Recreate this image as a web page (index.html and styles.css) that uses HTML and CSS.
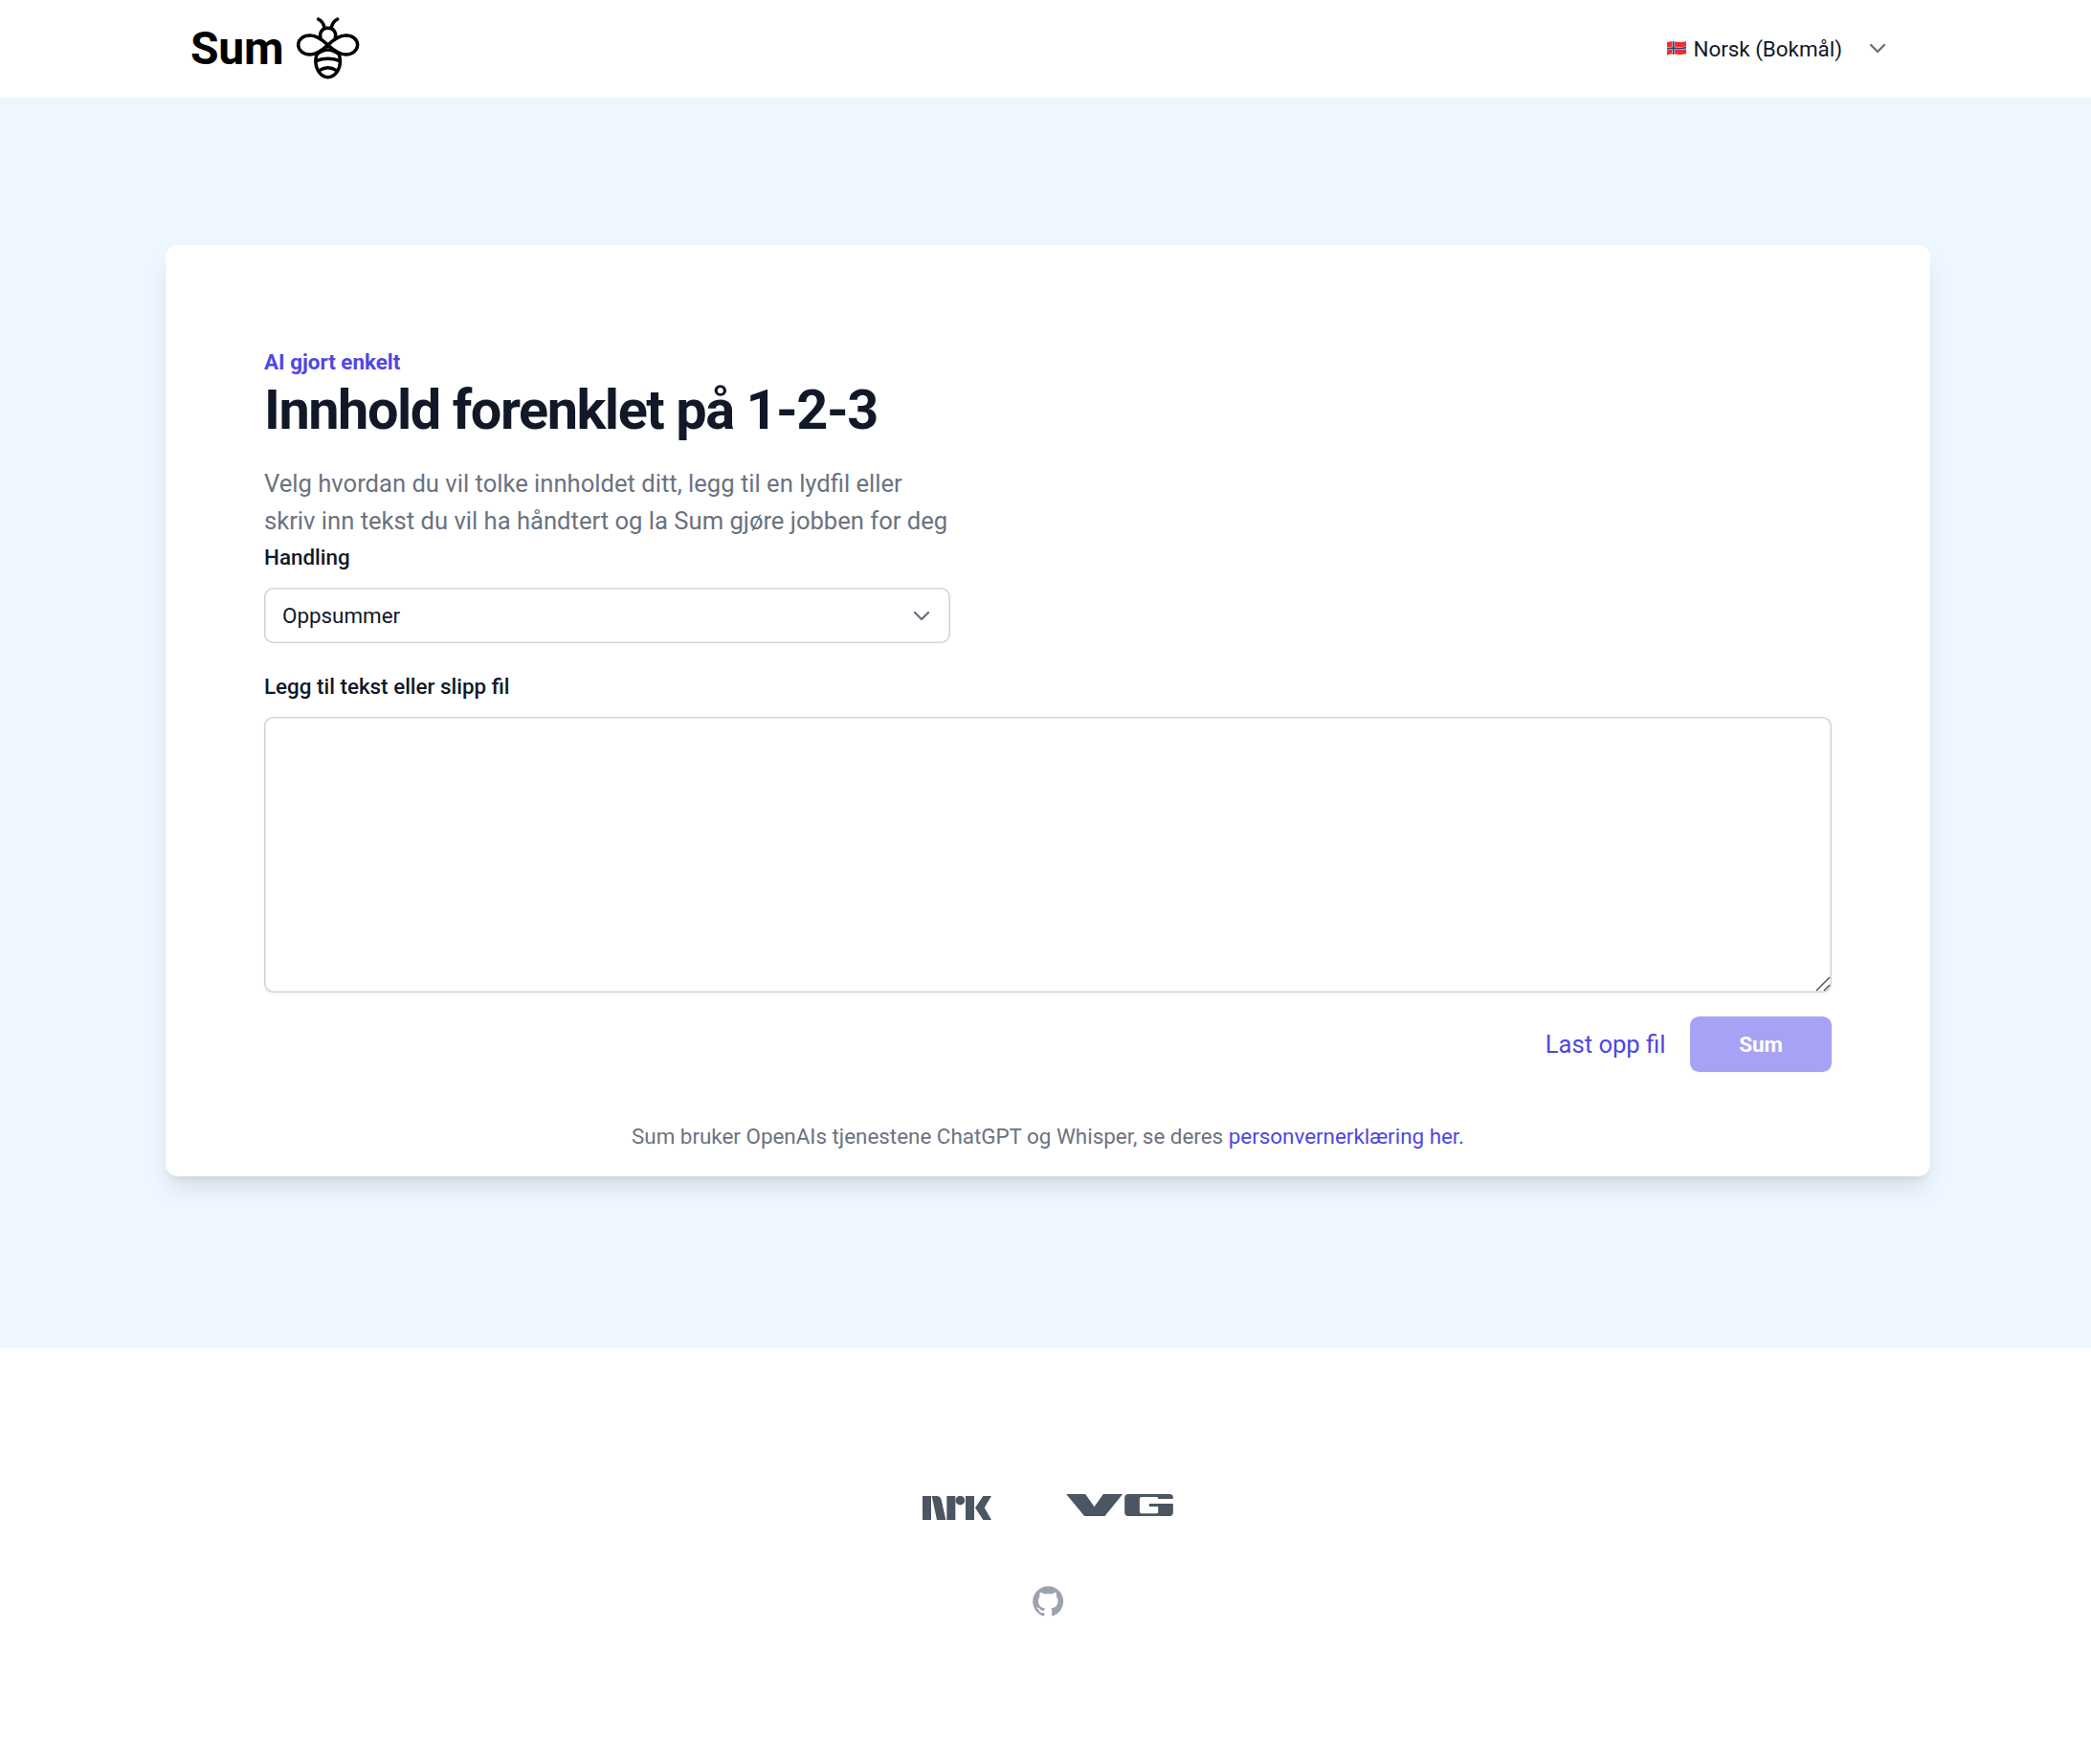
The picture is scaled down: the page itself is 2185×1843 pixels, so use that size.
FILE: index.html
```html
<!DOCTYPE html>
<html lang="nb">
<head>
<meta charset="utf-8">
<title>Sum</title>
<link rel="stylesheet" href="styles.css">
</head>
<body>
<header class="header">
  <a class="brand">
    <span class="brand-name">Sum</span>
    <svg class="bee" viewBox="0 25 196 194" fill="none" stroke="#000" stroke-width="10.5" stroke-linecap="round" stroke-linejoin="round">
      <path d="M68 31Q82 37 87 56M128 31Q114 37 109 56"/>
      <path d="M75 90C70 70 82 59 98 59S126 70 121 90"/>
      <path d="M98 112C76 91 60 82 42 82C20 82 5 95 5 111.500S20 142 42 142C62 142 78 130 98 112C120 91 136 82 154 82C176 82 191 95 191 111.500S176 142 154 142C134 142 118 130 98 112Z"/>
      <path d="M63 142C52 176 70 213 98 213S144 176 133 142Q98 112 63 142Z"/>
      <path d="M61 162Q98 148 135 162M71 192Q98 174 125 192"/>
    </svg>
  </a>
  <div class="language">
    <svg class="flag" viewBox="0 0 60 45">
      <path fill="#ef2b2f" d="M0 3Q15-1 30 2T60 1V40Q45 44 30 41T0 44Z"/>
      <path stroke="#fff" stroke-opacity=".75" stroke-width="9" fill="none" d="M20 1V42M0 24Q15 20 30 22T60 20"/>
      <path stroke="#1b4a80" stroke-width="5" fill="none" d="M20 1V42M0 24Q15 20 30 22T60 20"/>
    </svg>
    <span>Norsk (Bokmål)</span>
    <svg class="chevron" viewBox="0 0 16 9"><path d="M1 1l7 7 7-7"/></svg>
  </div>
</header>
<main class="main">
  <section class="card">
    <p class="eyebrow">AI gjort enkelt</p>
    <h1 class="title">Innhold forenklet på 1-2-3</h1>
    <p class="intro">Velg hvordan du vil tolke innholdet ditt, legg til en lydfil eller<br>skriv inn tekst du vil ha håndtert og la Sum gjøre jobben for deg</p>
    <div class="label">Handling</div>
    <div class="select">
      <span>Oppsummer</span>
      <svg class="chevron" viewBox="0 0 16 9"><path d="M1 1l7 7 7-7"/></svg>
    </div>
    <label class="label label-text" for="content">Legg til tekst eller slipp fil</label>
    <div class="textbox">
      <textarea class="textarea" id="content"></textarea>
      <svg class="grip" viewBox="0 0 16 16"><path d="M1 15L15 1M9 15L15 9"/></svg>
    </div>
    <div class="actions">
      <a class="upload">Last opp fil</a>
      <button class="submit" type="button">Sum</button>
    </div>
    <p class="note">Sum bruker OpenAIs tjenestene ChatGPT og Whisper, se deres <a class="link">personvernerklæring her.</a></p>
  </section>
</main>
<footer class="footer">
  <div class="logos">
    <svg class="nrk" viewBox="72 69 216 75" fill="#4b5563">
      <path d="M72 69H99V144H72ZM101 69H116Q128 69 131 81L145 144H117ZM148 69H175V144H148ZM207 69H234V144H207ZM262 69H288L266 106L288 144H262L237 106Z"/>
      <circle cx="190" cy="83" r="14.500"/>
    </svg>
    <svg class="vg" viewBox="523 63 335 69" fill="#4b5563">
      <path d="M523 63H583L611 103L639 63H700L644 132H580Z"/>
      <path d="M718 63H847Q858 63 858 74V78H811V76Q811 72 806 72H759Q753 72 753 78V118Q753 124 759 124H806Q811 124 811 119V102H783V93H858V121Q858 132 847 132H718Q706 132 706 120V75Q706 63 718 63Z"/>
    </svg>
  </div>
  <svg class="github" viewBox="0 0 24 24" fill="#9ca3af"><path fill-rule="evenodd" d="M12 2C6.477 2 2 6.484 2 12.017c0 4.425 2.865 8.180 6.839 9.504.5.092.682-.217.682-.483 0-.237-.008-.868-.013-1.703-2.782.605-3.369-1.343-3.369-1.343-.454-1.158-1.110-1.466-1.110-1.466-.908-.620.069-.608.069-.608 1.003.070 1.531 1.032 1.531 1.032.892 1.530 2.341 1.088 2.910.832.092-.647.350-1.088.636-1.338-2.220-.253-4.555-1.113-4.555-4.951 0-1.093.390-1.988 1.029-2.688-.103-.253-.446-1.272.098-2.650 0 0 .840-.270 2.750 1.026A9.564 9.564 0 0112 6.844c.850.004 1.705.115 2.504.337 1.909-1.296 2.747-1.027 2.747-1.027.546 1.379.202 2.398.100 2.651.640.700 1.028 1.595 1.028 2.688 0 3.848-2.339 4.695-4.566 4.943.359.309.678.920.678 1.855 0 1.338-.012 2.419-.012 2.747 0 .268.180.580.688.482A10.019 10.019 0 0022 12.017C22 6.484 17.522 2 12 2z" clip-rule="evenodd"/></svg>
</footer>
</body>
</html>
```
FILE: styles.css
```css
* { box-sizing: border-box; }
body {
  margin: 0;
  background: #fff;
  color: #111827;
  font: 22.4px/38px Roboto, sans-serif;
}
p, h1 { margin: 0; }
svg { display: block; flex: none; }

.header {
  height: 102px;
  padding: 0 215px 1px 199px;
  display: flex;
  align-items: center;
  justify-content: space-between;
}
.brand { display: flex; align-items: center; gap: 14px; color: #000; }
.brand-name { font-size: 48px; line-height: 58px; font-weight: 700; letter-spacing: -0.005em; }
.bee { width: 65.300px; height: 64.700px; }
.language { display: flex; align-items: center; }
.flag { width: 20px; height: 15px; margin-right: 7px; }
.chevron {
  width: 16px;
  height: 9px;
  margin-left: 29px;
  fill: none;
  stroke: #6b7280;
  stroke-width: 2.400;
  stroke-linecap: round;
  stroke-linejoin: round;
  overflow: visible;
}

.main { height: 1306px; padding: 154px 168px 0 173px; background: #eef6ff; }
.card {
  height: 973px;
  padding: 104px 103px 0;
  border-radius: 12.800px;
  background: #fff;
  box-shadow: 0 16px 24px -4.800px rgb(0 0 0 / .1), 0 6.400px 9.600px -6.400px rgb(0 0 0 / .1);
}
.eyebrow { line-height: 36px; font-weight: 700; color: #4f46e5; }
.title { margin-top: 1px; font-size: 57.600px; line-height: 64px; font-weight: 700; letter-spacing: -0.025em; }
.intro { margin-top: 24.500px; font-size: 25.600px; line-height: 39px; color: #6b7280; white-space: nowrap; }
.label { display: block; margin-top: -1px; font-weight: 500; }
.label-text { margin-top: 25.500px; }
.select {
  width: 717px;
  height: 58px;
  margin-top: 13.500px;
  padding: 0 22px 0 19px;
  display: flex;
  align-items: center;
  justify-content: space-between;
  border-radius: 9.600px;
  box-shadow: inset 0 0 0 1.600px #d1d5db;
}
.textbox { position: relative; height: 288px; margin-top: 13.500px; }
.textarea {
  display: block;
  width: 100%;
  height: 100%;
  padding: 10px 19px;
  border: 0;
  border-radius: 9.600px;
  outline: 0;
  resize: none;
  font: inherit;
  box-shadow: inset 0 0 0 1.600px #d1d5db, 0 1.600px 3.200px rgb(0 0 0 / .05);
}
.grip {
  position: absolute;
  right: 1.500px;
  bottom: 1px;
  width: 16px;
  height: 16px;
  fill: none;
  stroke: #555;
  stroke-width: 1.500;
}
.actions { margin-top: 25px; display: flex; justify-content: flex-end; align-items: center; gap: 25.500px; }
.upload { font-size: 25.600px; color: #4f46e5; }
.submit {
  width: 148px;
  height: 58px;
  padding: 0;
  border: 0;
  border-radius: 9.600px;
  background: #a7a2f5;
  color: #fff;
  font: 700 22.400px/38px Roboto, sans-serif;
  box-shadow: 0 1.600px 3.200px rgb(0 0 0 / .03);
}
.note { margin-top: 47.500px; text-align: center; color: #6b7280; }
.link { color: #4f46e5; }

.footer { padding: 153px 0 0 5px; display: flex; flex-direction: column; align-items: center; }
.logos { display: flex; gap: 78px; }
.nrk { width: 72px; height: 25px; margin-top: 2px; }
.vg { width: 112px; height: 23px; }
.github { width: 38.400px; height: 38.400px; margin-top: 66px; }
```
